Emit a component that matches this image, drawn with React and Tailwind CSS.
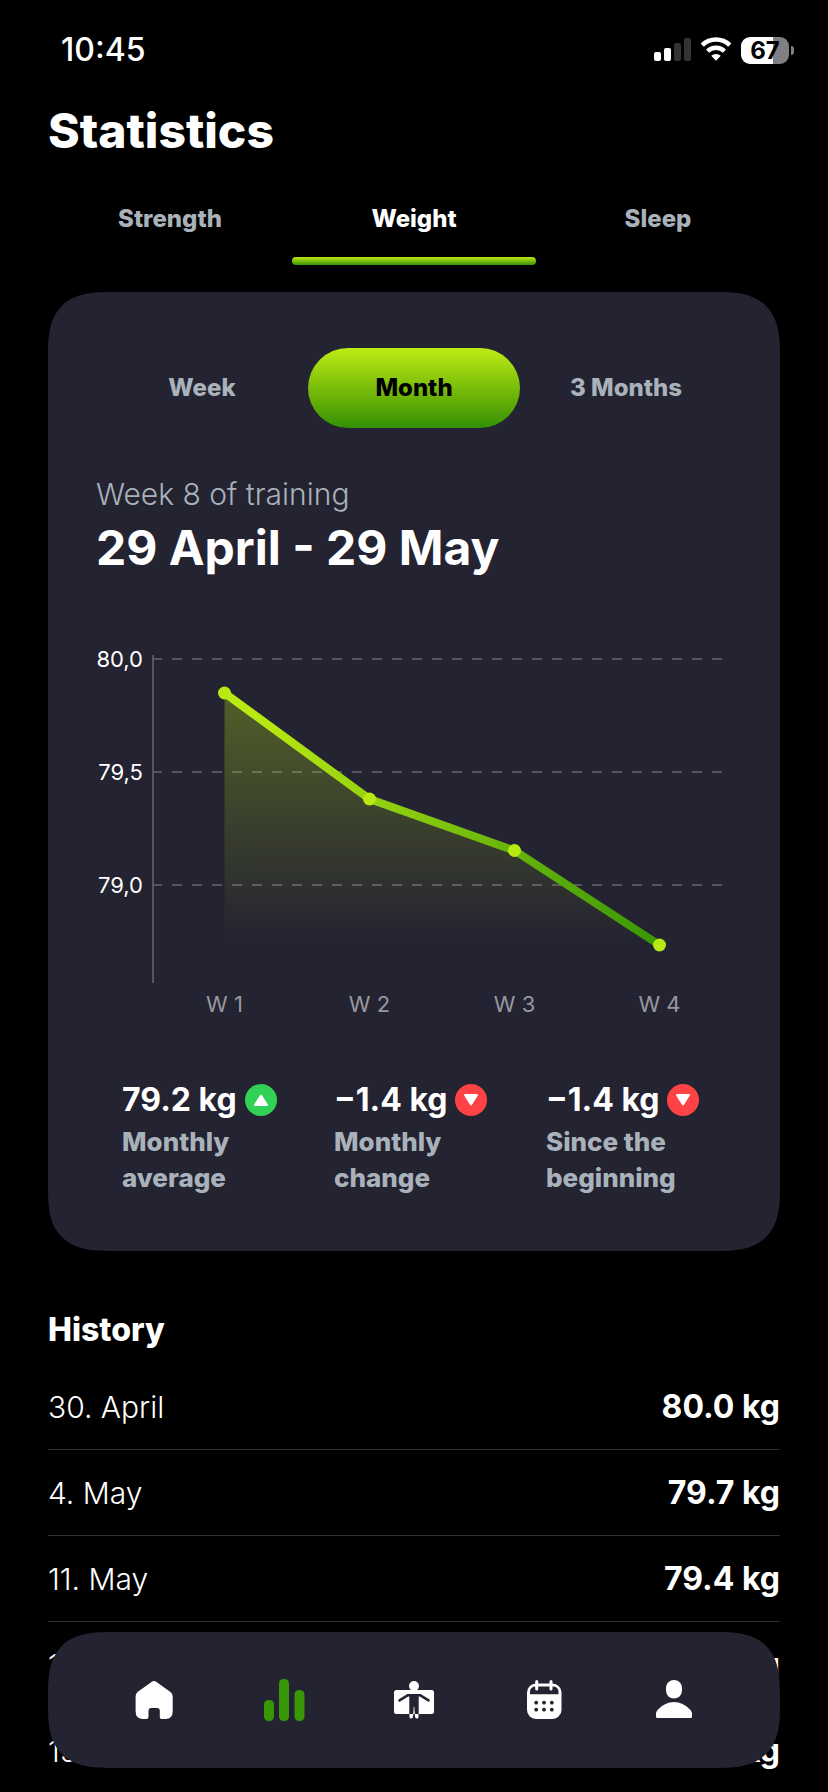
import React, { useState } from 'react';

const tabs = ['Strength', 'Weight', 'Sleep'];
const ranges = ['Week', 'Month', '3 Months'];

const stats = [
  { value: '79.2 kg', label: 'Monthly average', up: true },
  { value: '−1.4 kg', label: 'Monthly change', up: false },
  { value: '−1.4 kg', label: 'Since the beginning', up: false },
];

const history = [
  { date: '30. April', weight: '80.0 kg' },
  { date: '4. May', weight: '79.7 kg' },
  { date: '11. May', weight: '79.4 kg' },
  { date: '12. May', weight: '79.3 kg' },
  { date: '15. May', weight: '79.2 kg' },
];

const gridLines = [
  { label: '80,0', y: 19 },
  { label: '79,5', y: 132 },
  { label: '79,0', y: 245 },
];

const points = [
  { label: 'W 1', x: 128.5, y: 53 },
  { label: 'W 2', x: 273.5, y: 159 },
  { label: 'W 3', x: 418.5, y: 210.5 },
  { label: 'W 4', x: 563.5, y: 305 },
];

const StatusBar = () => (
  <header className="flex h-[100px] items-center justify-between pl-[61px] pr-[34px]">
    <span className="text-[32px] leading-10 font-medium">10:45</span>
    <div className="flex items-center">
      <svg className="h-7 w-[37px]" viewBox="0 0 37 28" aria-hidden="true">
        <rect x="0" y="16" width="7" height="9" rx="2" fill="#fff" />
        <rect x="10" y="12" width="7" height="13" rx="2" fill="#fff" />
        <rect x="20" y="7" width="7" height="18" rx="2" fill="#333" />
        <rect x="30" y="2" width="7" height="23" rx="2" fill="#333" />
      </svg>
      <svg className="ml-[9px] h-7 w-8" viewBox="0 0 32 28" aria-hidden="true">
        <path d="M2.2 9.2A19.6 19.6 0 0 1 29.8 9.2" fill="none" stroke="#fff" strokeWidth="4.6" />
        <path d="M7.6 15.2A11.8 11.8 0 0 1 24.4 15.2" fill="none" stroke="#fff" strokeWidth="4.4" />
        <path d="M11.2 19.8A7 7 0 0 1 20.8 19.8L16 24.8Z" fill="#fff" />
      </svg>
      <div className="ml-[9px] flex items-center gap-[2px]">
        <div className="flex h-[27px] w-12 items-center justify-center rounded-[9px] bg-[linear-gradient(90deg,#fff_67%,#808084_67%)] text-2xl leading-[27px] font-bold text-black">
          67
        </div>
        <div className="h-[9px] w-[3px] rounded-r-full bg-[#808084]" />
      </div>
    </div>
  </header>
);

const WeightChart = () => {
  const line = points.map((p) => `${p.x},${p.y}`).join(' ');
  return (
    <svg className="mt-[62px] block w-full" viewBox="0 0 636 384" role="img" aria-label="Weight by week">
      <defs>
        <linearGradient id="line" gradientUnits="userSpaceOnUse" x1="170" y1="150" x2="555" y2="110">
          <stop offset="0" stopColor="#b9e913" />
          <stop offset="1" stopColor="#349305" />
        </linearGradient>
        <linearGradient id="area" gradientUnits="userSpaceOnUse" x1="0" y1="53" x2="0" y2="302">
          <stop offset="0" stopColor="#b9e913" stopOpacity="0.3" />
          <stop offset="0.25" stopColor="#b9e913" stopOpacity="0.23" />
          <stop offset="1" stopColor="#b9e913" stopOpacity="0" />
        </linearGradient>
      </defs>
      {gridLines.map((g) => (
        <g key={g.label}>
          <text x="47" y={g.y + 8} textAnchor="end" fontSize="22" fill="#fff">{g.label}</text>
          <line x1="56" x2="626" y1={g.y} y2={g.y} stroke="#56555f" strokeWidth="2" strokeDasharray="10 10" />
        </g>
      ))}
      <line x1="57" x2="57" y1="15" y2="343" stroke="#56555f" strokeWidth="2" />
      <polygon points={`${line} 563.5,305 128.5,305`} fill="url(#area)" />
      <polyline points={line} fill="none" stroke="url(#line)" strokeWidth="8" strokeLinejoin="round" />
      {points.map((p) => (
        <g key={p.label}>
          <circle cx={p.x} cy={p.y} r="6.5" fill="#b9e913" />
          <text x={p.x} y="372" textAnchor="middle" fontSize="22" fill="#98979f">{p.label}</text>
        </g>
      ))}
    </svg>
  );
};

const Trend = ({ up }) => (
  <svg className="size-8 shrink-0" viewBox="0 0 32 32" aria-hidden="true">
    <circle cx="16" cy="16" r="16" fill={up ? '#31d158' : '#ff4245'} />
    <path
      d={up ? 'M16 11.5L22 21H10Z' : 'M10 11H22L16 20.5Z'}
      fill="#fff"
      stroke="#fff"
      strokeWidth="2"
      strokeLinejoin="round"
    />
  </svg>
);

const navItems = [
  {
    name: 'Home',
    icon: (
      <path
        fill="#fff"
        d="M19.5 4Q22 1.8 24.5 4L38.5 14Q40.7 15.7 40.7 18.5V33Q40.7 41 33.5 41H29.5Q27.8 41 27.8 39V32.5Q27.8 30 25.5 30H18.8Q16.5 30 16.5 32.5V39Q16.5 41 14.5 41H11Q3.6 41 3.6 33V18.5Q3.6 15.7 5.5 14Z"
      />
    ),
  },
  {
    name: 'Statistics',
    icon: (
      <g fill="#379706">
        <rect x="2" y="22" width="10" height="21" rx="4.5" />
        <rect x="17" y="1" width="10" height="42" rx="4.5" />
        <rect x="32.5" y="12" width="10" height="31" rx="4.5" />
      </g>
    ),
  },
  {
    name: 'Body',
    icon: (
      <>
        <rect x="2" y="12" width="40" height="24" rx="2.5" fill="#fff" />
        <circle cx="22" cy="8" r="5" fill="#fff" />
        <path d="M7.5 22.3L16 17.2H28L36.5 22.3" fill="none" stroke="#242331" strokeWidth="2.6" strokeLinecap="round" strokeLinejoin="round" />
        <path d="M17.3 16.2H26.7V36H17.3Z" fill="#242331" />
        <path d="M21.2 36L21.7 29H22.3L22.8 36Z" fill="#fff" />
        <path d="M17.5 36H21.3L20.8 39.5Q20.5 40.5 19 40.5T17.5 39ZM22.7 36H26.5V39Q26.5 40.5 25 40.5T23.2 39.5Z" fill="#fff" />
      </>
    ),
  },
  {
    name: 'Calendar',
    icon: (
      <>
        <rect x="5" y="5.5" width="34.5" height="35.5" rx="9" fill="#fff" />
        <path d="M8 16.2V14Q8 8.5 14 8.5H30.5Q36.5 8.5 36.5 14V16.2Z" fill="#242331" />
        <path d="M14.7 3.5V11M29 3.5V11" stroke="#fff" strokeWidth="3" strokeLinecap="round" />
        {[24.7, 31.7].map((y) =>
          [14.2, 22, 29.8].map((x) => <circle key={`${x}-${y}`} cx={x} cy={y} r="1.9" fill="#242331" />)
        )}
      </>
    ),
  },
  {
    name: 'Profile',
    icon: (
      <>
        <rect x="14" y="2" width="16" height="18.5" rx="8" fill="#fff" />
        <path d="M4 36Q4 33.5 6 31.5Q13 24 22 24T38 31.5Q40 33.5 40 36V38.5Q40 40 38.5 40H5.5Q4 40 4 38.5Z" fill="#fff" />
      </>
    ),
  },
];

const App = () => {
  const [tab, setTab] = useState('Weight');
  const [range, setRange] = useState('Month');

  return (
    <div className="h-screen overflow-hidden bg-black font-['Inter',sans-serif] text-white">
      <StatusBar />
      <main className="px-12">
        <h1 className="text-[48px] leading-[62px] font-extrabold">Statistics</h1>

        <nav className="grid grid-cols-3 pt-[39px]">
          {tabs.map((name) => (
            <button key={name} type="button" onClick={() => setTab(name)} className="flex flex-col gap-5">
              <span className={`w-full text-center text-2xl leading-9 font-extrabold ${tab === name ? 'text-white' : 'text-[#a9b2ba]'}`}>
                {name}
              </span>
              <span className={`h-2 w-full rounded-full ${tab === name ? 'bg-linear-to-b from-[#b9e913] to-[#349305]' : ''}`} />
            </button>
          ))}
        </nav>

        <section className="mt-[27px] rounded-[50px] bg-[#242331] px-12 pt-14 pb-[55px] supports-[corner-shape:squircle]:rounded-[64px] supports-[corner-shape:squircle]:[corner-shape:superellipse(1.5)]">
          <div className="grid grid-cols-3">
            {ranges.map((name) => (
              <button
                key={name}
                type="button"
                onClick={() => setRange(name)}
                className={`h-20 rounded-full text-2xl font-extrabold ${range === name ? 'bg-linear-to-b from-[#bdec14] to-[#309003] text-black' : 'text-[#a9b2ba]'}`}
              >
                {name}
              </button>
            ))}
          </div>

          <p className="mt-[46px] text-[30px] leading-10 font-light text-[#a9b2ba]">Week 8 of training</p>
          <h2 className="mt-1 text-[48px] leading-[60px] font-bold">29 April - 29 May</h2>

          <WeightChart />

          <div className="mt-14 grid grid-cols-3">
            {stats.map((s, i) => (
              <div key={i} className="pl-[26px]">
                <div className="flex items-center gap-2">
                  <span className="text-[32px] leading-10 font-bold whitespace-nowrap">{s.value}</span>
                  <Trend up={s.up} />
                </div>
                <p className="mt-1 max-w-[160px] text-[26px] leading-9 font-extrabold text-[#a9b2ba]">{s.label}</p>
              </div>
            ))}
          </div>
        </section>

        <h3 className="mt-[59px] text-[32px] leading-10 font-extrabold">History</h3>
        <ul className="mt-[14px]">
          {history.map((h) => (
            <li key={h.date} className="flex h-[86px] items-center justify-between border-b border-[#303030] leading-10">
              <span className="text-[30px] font-light">{h.date}</span>
              <span className="text-[32px] font-bold">{h.weight}</span>
            </li>
          ))}
        </ul>
      </main>

      <nav className="fixed inset-x-12 bottom-6 grid h-[136px] grid-cols-5 rounded-[54px] bg-[#242331] px-[41px] supports-[corner-shape:squircle]:rounded-[64px] supports-[corner-shape:squircle]:[corner-shape:superellipse(1.5)]">
        {navItems.map((item) => (
          <button key={item.name} type="button" aria-label={item.name} className="flex items-center justify-center">
            <svg className="size-11" viewBox="0 0 44 44" aria-hidden="true">{item.icon}</svg>
          </button>
        ))}
      </nav>
    </div>
  );
};

export default App;
